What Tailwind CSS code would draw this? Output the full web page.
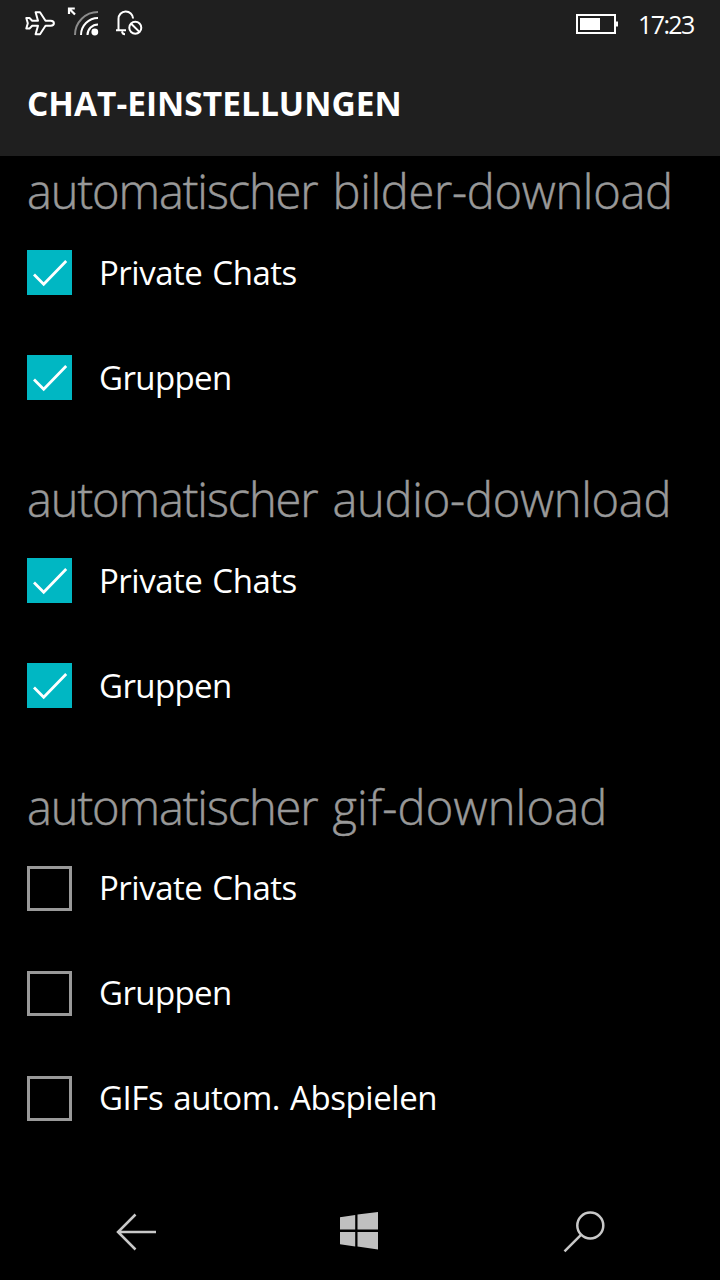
<!DOCTYPE html>
<html lang="de">
<head>
<meta charset="utf-8">
<title>Chat-Einstellungen</title>
<script src="https://cdn.jsdelivr.net/npm/@tailwindcss/browser@4"></script>
</head>
<body class="bg-black">
<svg class="hidden">
  <symbol id="check" viewBox="0 0 45 45"><path d="M7 24.500 L16.700 34.200 L39.200 11" fill="none" stroke="#fff" stroke-width="2.8"/></symbol>
</svg>
<div class="w-[720px] h-[1280px] bg-black text-white flex flex-col overflow-hidden font-['Open_Sans','Noto_Sans',sans-serif]">
  <header class="h-[156px] shrink-0 bg-[#1f1f1f] flex flex-col">
    <div class="h-[50px] flex items-start justify-between">
      <svg class="w-[160px] h-[50px]" viewBox="0 0 160 50" fill="none" stroke="#fff" stroke-width="2">
        <path d="M26.300 18h3.200l2.700 2.700h5.800L35.600 12.200h4.400l5.500 8.500h5.200q3.200.2 3.200 2.500t-3.200 2.500h-5.200L40 34.200h-4.400l2.400-8.500h-5.800l-2.700 2.800h-3.200l1.500-5.300z" stroke-linejoin="round"/>
        <path d="M75 14.500 69 8.500M69 14V8.500h5.800" stroke-width="2.2"/>
        <path d="M75 35A23 23 0 0 1 98 12" stroke="#8b8b8b"/>
        <path d="M81 35A17 17 0 0 1 98 18M87.500 35A10.500 10.500 0 0 1 98 24.500"/>
        <circle cx="94.800" cy="32" r="3.400" fill="#fff" stroke="none"/>
        <path d="M116 30.200h2.500V19a7.300 7.300 0 0 1 14.600-.5M116 30.200h10M122 31.500q.5 2.700 3 2.700"/>
        <circle cx="135.300" cy="27.800" r="6"/><path d="m131.200 23.700 8.200 8.200"/>
      </svg>
      <div class="flex items-start h-[50px] pr-[26px]">
        <svg class="w-[44px] h-[50px]" viewBox="575 0 44 50"><path d="M577 15h38v18h-38z" fill="none" stroke="#fff" stroke-width="2"/><path d="M580 18h20v12h-20zM616 21.500h2v5h-2z" fill="#fff"/></svg>
        <span class="ml-[19px] w-[56px] pt-[7px] text-[25px] leading-[34px] tracking-[-1.6px] whitespace-nowrap">17:23</span>
      </div>
    </div>
    <h1 class="pl-[27px] pt-[30px] text-[33.5px] leading-[46px] font-bold whitespace-nowrap">CHAT-EINSTELLUNGEN</h1>
  </header>
  <main class="h-[1026px] shrink-0 pl-[27px]">
    <section>
      <h2 class="h-[64px] pt-[3px] text-[47px] leading-[64px] font-light [-webkit-text-stroke:0.5px_#999] text-[#999] whitespace-nowrap flex gap-[15px]"><span class="tracking-[-1.1px]">automatischer </span><span class="tracking-[-0.3px]">bilder-download</span></h2>
      <div class="h-[105px] flex items-center gap-[27px]"><svg class="size-[45px] bg-[#00b7c3]"><use href="#check"/></svg><span class="text-[33px] leading-[45px] tracking-[-0.5px] [word-spacing:2px] whitespace-nowrap">Private Chats</span></div>
      <div class="h-[105px] flex items-center gap-[27px]"><svg class="size-[45px] bg-[#00b7c3]"><use href="#check"/></svg><span class="text-[33px] leading-[45px] tracking-[-0.6px] whitespace-nowrap">Gruppen</span></div>
    </section>
    <section>
      <h2 class="h-[98px] pt-[37px] text-[47px] leading-[64px] font-light [-webkit-text-stroke:0.5px_#999] text-[#999] whitespace-nowrap flex gap-[15px]"><span class="tracking-[-1.1px]">automatischer </span><span class="tracking-[-0.25px]">audio-download</span></h2>
      <div class="h-[105px] flex items-center gap-[27px]"><svg class="size-[45px] bg-[#00b7c3]"><use href="#check"/></svg><span class="pb-px text-[33px] leading-[45px] tracking-[-0.5px] [word-spacing:2px] whitespace-nowrap">Private Chats</span></div>
      <div class="h-[105px] flex items-center gap-[27px]"><svg class="size-[45px] bg-[#00b7c3]"><use href="#check"/></svg><span class="pb-px text-[33px] leading-[45px] tracking-[-0.6px] whitespace-nowrap">Gruppen</span></div>
    </section>
    <section>
      <h2 class="h-[97.5px] pt-[37px] text-[47px] leading-[64px] font-light [-webkit-text-stroke:0.5px_#999] text-[#999] whitespace-nowrap flex gap-[15px]"><span class="tracking-[-1.1px]">automatischer </span><span class="tracking-[0.2px]">gif-download</span></h2>
      <div class="h-[105px] flex items-center gap-[27px]"><span class="size-[45px] border-3 border-[#999]"></span><span class="pb-[2px] text-[33px] leading-[45px] tracking-[-0.5px] [word-spacing:2px] whitespace-nowrap">Private Chats</span></div>
      <div class="h-[105px] flex items-center gap-[27px]"><span class="size-[45px] border-3 border-[#999]"></span><span class="pb-[2px] text-[33px] leading-[45px] tracking-[-0.6px] whitespace-nowrap">Gruppen</span></div>
      <div class="h-[105px] flex items-center gap-[27px]"><span class="size-[45px] border-3 border-[#999]"></span><span class="pb-[2px] text-[33px] leading-[45px] tracking-[-0.45px] [word-spacing:2px] whitespace-nowrap">GIFs autom. Abspielen</span></div>
    </section>
  </main>
  <nav class="h-[98px] shrink-0 flex justify-between items-end px-[96px]">
    <svg class="w-[80px] h-[80px]" viewBox="96 1200 80 80" fill="none" stroke="#c8c8c8" stroke-width="2.5"><path d="M156 1232h-38M135.500 1214.500 118 1232l17.500 17.500"/></svg>
    <svg class="w-[80px] h-[80px]" viewBox="320 1200 80 80" fill="#c0c0c0"><path d="M340 1217.200l15.200-2.200v14.500H340zM357.500 1214.600l20.500-2.600v17.500h-20.500zM340 1232h15.200v14.500l-15.200-2.200zM357.500 1232H378v17.500l-20.500-2.900z"/></svg>
    <svg class="w-[80px] h-[80px]" viewBox="544 1200 80 80" fill="none" stroke="#c8c8c8" stroke-width="2.500"><circle cx="590.300" cy="1225.500" r="13"/><path d="M581 1234.800 564.500 1251.300"/></svg>
  </nav>
</div>
</body>
</html>
